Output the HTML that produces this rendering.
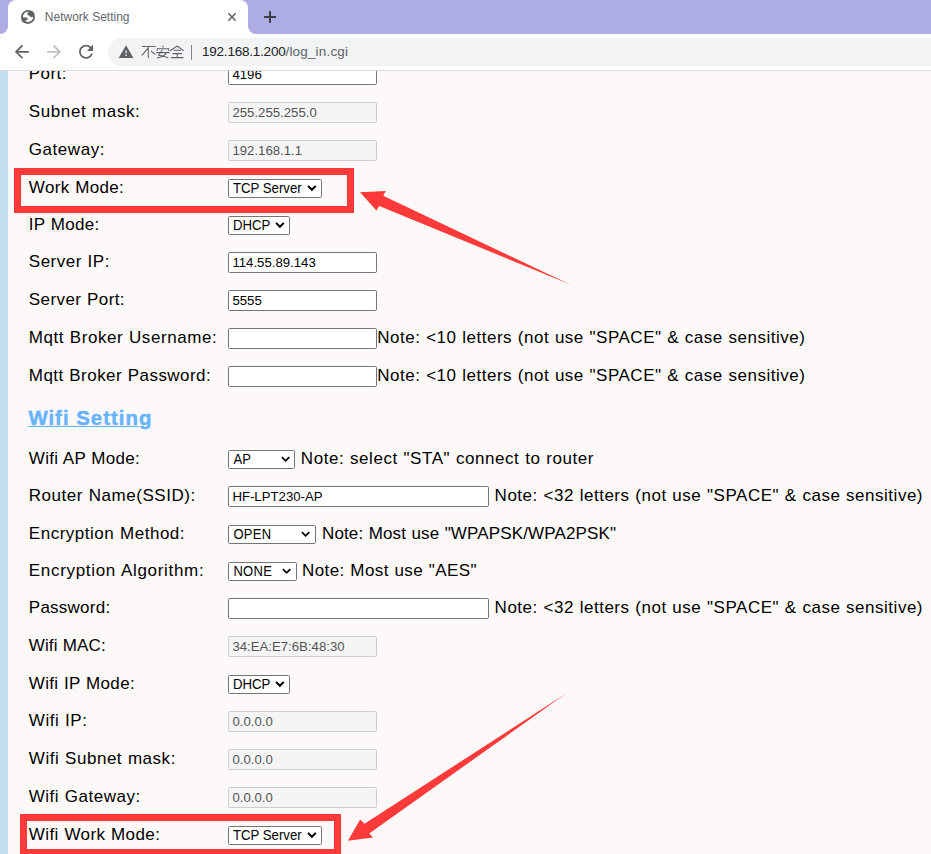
<!DOCTYPE html>
<html><head><meta charset="utf-8"><style>
html,body{margin:0;padding:0;width:931px;height:854px;overflow:hidden;background:#FDF9F8;font-family:"Liberation Sans",sans-serif;}
.t{position:absolute;white-space:pre;}
.a{position:absolute;}
.inp{position:absolute;box-sizing:border-box;background:#fff;border:1px solid #767676;border-radius:1.6px;}
.inp.dis{background:#F5F5F5;border-color:#CDCDCD;}
#page{position:absolute;left:0;top:71px;width:931px;height:783px;overflow:hidden;}
#strip{position:absolute;left:0;top:71px;width:8px;height:783px;background:#C1DEEF;}
#chrome{position:absolute;left:0;top:0;width:931px;height:70px;}
</style></head><body>
<div id="page"><div style="position:absolute;left:0;top:-71px;width:931px;height:854px">
<div class="t" style="left:28.8px;top:64.41px;font-size:17px;line-height:20px;letter-spacing:0.4249999999999894px;word-spacing:0.5px;color:#000;font-weight:normal;">Port:</div>
<div class="t" style="left:28.8px;top:102.11px;font-size:17px;line-height:20px;letter-spacing:0.5999999999999803px;word-spacing:0.5px;color:#000;font-weight:normal;">Subnet mask:</div>
<div class="t" style="left:28.8px;top:139.81px;font-size:17px;line-height:20px;letter-spacing:0.542857142857135px;word-spacing:0.5px;color:#000;font-weight:normal;">Gateway:</div>
<div class="t" style="left:28.8px;top:177.51px;font-size:17px;line-height:20px;letter-spacing:0.35555555555555074px;word-spacing:0.5px;color:#000;font-weight:normal;">Work Mode:</div>
<div class="t" style="left:28.8px;top:215.21px;font-size:17px;line-height:20px;letter-spacing:0.3px;word-spacing:0.5px;color:#000;font-weight:normal;">IP Mode:</div>
<div class="t" style="left:28.8px;top:252.11px;font-size:17px;line-height:20px;letter-spacing:0.5000000000000062px;word-spacing:0.5px;color:#000;font-weight:normal;">Server IP:</div>
<div class="t" style="left:28.8px;top:289.81px;font-size:17px;line-height:20px;letter-spacing:0.4181818181818231px;word-spacing:0.5px;color:#000;font-weight:normal;">Server Port:</div>
<div class="t" style="left:28.8px;top:328.21px;font-size:17px;line-height:20px;letter-spacing:0.5550000000000054px;word-spacing:0.5px;color:#000;font-weight:normal;">Mqtt Broker Username:</div>
<div class="t" style="left:28.8px;top:365.91px;font-size:17px;line-height:20px;letter-spacing:0.45px;word-spacing:0.5px;color:#000;font-weight:normal;">Mqtt Broker Password:</div>
<div class="inp" style="left:228px;top:64px;width:149px;height:21px"></div>
<div class="t" style="left:232.4px;top:67.43px;font-size:13.2px;line-height:16px;letter-spacing:0px;word-spacing:0px;color:#000;font-weight:normal;">4196</div>
<div class="inp dis" style="left:228px;top:102px;width:149px;height:21px"></div>
<div class="t" style="left:232.4px;top:105.43px;font-size:13.2px;line-height:16px;letter-spacing:0px;word-spacing:0px;color:#545454;font-weight:normal;">255.255.255.0</div>
<div class="inp dis" style="left:228px;top:140px;width:149px;height:21px"></div>
<div class="t" style="left:232.4px;top:143.43px;font-size:13.2px;line-height:16px;letter-spacing:0px;word-spacing:0px;color:#545454;font-weight:normal;">192.168.1.1</div>
<div class="inp" style="left:228px;top:179px;width:94px;height:19px"></div>
<div class="t" style="left:233px;top:180.63px;font-size:13.2px;line-height:16px;letter-spacing:0px;word-spacing:0px;color:#000;font-weight:normal;transform:scaleY(1.11);transform-origin:0 11.57px;">TCP Server</div>
<svg class="a" style="left:307px;top:185px" width="11" height="7" viewBox="0 0 11 7"><path d="M1 0.9 L4.9 4.8 L8.8 0.9" fill="none" stroke="#000" stroke-width="2"/></svg>
<div class="inp" style="left:228px;top:216px;width:62px;height:19px"></div>
<div class="t" style="left:233px;top:217.63px;font-size:13.2px;line-height:16px;letter-spacing:0px;word-spacing:0px;color:#000;font-weight:normal;transform:scaleY(1.11);transform-origin:0 11.57px;">DHCP</div>
<svg class="a" style="left:275px;top:222px" width="11" height="7" viewBox="0 0 11 7"><path d="M1 0.9 L4.9 4.8 L8.8 0.9" fill="none" stroke="#000" stroke-width="2"/></svg>
<div class="inp" style="left:228px;top:252px;width:149px;height:21px"></div>
<div class="t" style="left:232.4px;top:255.43px;font-size:13.2px;line-height:16px;letter-spacing:0px;word-spacing:0px;color:#000;font-weight:normal;">114.55.89.143</div>
<div class="inp" style="left:228px;top:290px;width:149px;height:21px"></div>
<div class="t" style="left:232.4px;top:293.43px;font-size:13.2px;line-height:16px;letter-spacing:0px;word-spacing:0px;color:#000;font-weight:normal;">5555</div>
<div class="inp" style="left:228px;top:328px;width:149px;height:21px"></div>
<div class="inp" style="left:228px;top:366px;width:149px;height:21px"></div>
<div class="t" style="left:377.30000000000024px;top:328.21px;font-size:17px;line-height:20px;letter-spacing:0.5058823529411766px;word-spacing:0.5px;color:#000;font-weight:normal;">Note: &lt;10 letters (not use "SPACE" &amp; case sensitive)</div>
<div class="t" style="left:377.30000000000024px;top:365.91px;font-size:17px;line-height:20px;letter-spacing:0.5058823529411766px;word-spacing:0.5px;color:#000;font-weight:normal;">Note: &lt;10 letters (not use "SPACE" &amp; case sensitive)</div>
<div class="t" style="left:28.4px;top:405.63px;font-size:20.4px;line-height:24px;letter-spacing:1.0px;word-spacing:0px;color:#66B3FF;font-weight:bold;-webkit-text-stroke:0.45px #66B3FF;">Wifi Setting</div>
<div style="position:absolute;left:28.4px;top:426px;width:110.5px;height:1.1px;background:#66B3FF"></div>
<div class="t" style="left:28.8px;top:448.71px;font-size:17px;line-height:20px;letter-spacing:0.28333333333331534px;word-spacing:0.5px;color:#000;font-weight:normal;">Wifi AP Mode:</div>
<div class="t" style="left:28.8px;top:485.51px;font-size:17px;line-height:20px;letter-spacing:0.5294117647058757px;word-spacing:0.5px;color:#000;font-weight:normal;">Router Name(SSID):</div>
<div class="t" style="left:28.8px;top:523.71px;font-size:17px;line-height:20px;letter-spacing:0.5176470588235422px;word-spacing:0.5px;color:#000;font-weight:normal;">Encryption Method:</div>
<div class="t" style="left:28.8px;top:561.11px;font-size:17px;line-height:20px;letter-spacing:0.6850000000000107px;word-spacing:0.5px;color:#000;font-weight:normal;">Encryption Algorithm:</div>
<div class="t" style="left:28.8px;top:598.01px;font-size:17px;line-height:20px;letter-spacing:0.2500000000000135px;word-spacing:0.5px;color:#000;font-weight:normal;">Password:</div>
<div class="t" style="left:28.8px;top:636.11px;font-size:17px;line-height:20px;letter-spacing:0.09999999999998649px;word-spacing:0.5px;color:#000;font-weight:normal;">Wifi MAC:</div>
<div class="t" style="left:28.8px;top:673.51px;font-size:17px;line-height:20px;letter-spacing:0.3416666666666666px;word-spacing:0.5px;color:#000;font-weight:normal;">Wifi IP Mode:</div>
<div class="t" style="left:28.8px;top:711.01px;font-size:17px;line-height:20px;letter-spacing:0.5428571428571348px;word-spacing:0.5px;color:#000;font-weight:normal;">Wifi IP:</div>
<div class="t" style="left:28.8px;top:748.71px;font-size:17px;line-height:20px;letter-spacing:0.5374999999999865px;word-spacing:0.5px;color:#000;font-weight:normal;">Wifi Subnet mask:</div>
<div class="t" style="left:28.8px;top:787.31px;font-size:17px;line-height:20px;letter-spacing:0.49999999999999095px;word-spacing:0.5px;color:#000;font-weight:normal;">Wifi Gateway:</div>
<div class="t" style="left:28.8px;top:824.71px;font-size:17px;line-height:20px;letter-spacing:0.4071428571428571px;word-spacing:0.5px;color:#000;font-weight:normal;">Wifi Work Mode:</div>
<div class="inp" style="left:228px;top:450px;width:67px;height:19px"></div>
<div class="t" style="left:233.4px;top:451.70px;font-size:13px;line-height:16px;letter-spacing:0.3px;word-spacing:0px;color:#000;font-weight:normal;transform:scaleY(1.11);transform-origin:0 11.50px;">AP</div>
<svg class="a" style="left:280.5px;top:456px" width="10" height="7" viewBox="0 0 10 7"><path d="M0.9 1.1 L4.6 4.8 L8.3 1.1" fill="none" stroke="#000" stroke-width="1.7"/></svg>
<div class="t" style="left:300.8px;top:448.71px;font-size:17px;line-height:20px;letter-spacing:0.5571428571428572px;word-spacing:0.5px;color:#000;font-weight:normal;">Note: select "STA" connect to router</div>
<div class="inp" style="left:228px;top:486px;width:261px;height:21px"></div>
<div class="t" style="left:232.4px;top:489.43px;font-size:13.2px;line-height:16px;letter-spacing:0px;word-spacing:0px;color:#000;font-weight:normal;">HF-LPT230-AP</div>
<div class="t" style="left:494.59999999999957px;top:485.51px;font-size:17px;line-height:20px;letter-spacing:0.5137254901960867px;word-spacing:0.5px;color:#000;font-weight:normal;">Note: &lt;32 letters (not use "SPACE" &amp; case sensitive)</div>
<div class="inp" style="left:228px;top:525px;width:88px;height:19px"></div>
<div class="t" style="left:233.4px;top:526.70px;font-size:13px;line-height:16px;letter-spacing:0.3px;word-spacing:0px;color:#000;font-weight:normal;transform:scaleY(1.11);transform-origin:0 11.50px;">OPEN</div>
<svg class="a" style="left:300.6px;top:531px" width="10" height="7" viewBox="0 0 10 7"><path d="M0.9 1.1 L4.6 4.8 L8.3 1.1" fill="none" stroke="#000" stroke-width="1.7"/></svg>
<div class="t" style="left:321.99999999999955px;top:523.71px;font-size:17px;line-height:20px;letter-spacing:0.14000000000004315px;word-spacing:0.5px;color:#000;font-weight:normal;">Note: Most use "WPAPSK/WPA2PSK"</div>
<div class="inp" style="left:228px;top:562px;width:69px;height:19px"></div>
<div class="t" style="left:233.4px;top:563.70px;font-size:13px;line-height:16px;letter-spacing:0.3px;word-spacing:0px;color:#000;font-weight:normal;transform:scaleY(1.11);transform-origin:0 11.50px;">NONE</div>
<svg class="a" style="left:281.8px;top:568px" width="10" height="7" viewBox="0 0 10 7"><path d="M0.9 1.1 L4.6 4.8 L8.3 1.1" fill="none" stroke="#000" stroke-width="1.7"/></svg>
<div class="t" style="left:302.00000000000045px;top:561.11px;font-size:17px;line-height:20px;letter-spacing:0.41578947368416486px;word-spacing:0.5px;color:#000;font-weight:normal;">Note: Most use "AES"</div>
<div class="inp" style="left:228px;top:598px;width:261px;height:21px"></div>
<div class="t" style="left:494.59999999999957px;top:598.01px;font-size:17px;line-height:20px;letter-spacing:0.5137254901960867px;word-spacing:0.5px;color:#000;font-weight:normal;">Note: &lt;32 letters (not use "SPACE" &amp; case sensitive)</div>
<div class="inp dis" style="left:228px;top:636px;width:149px;height:21px"></div>
<div class="t" style="left:232.4px;top:639.43px;font-size:13.2px;line-height:16px;letter-spacing:0px;word-spacing:0px;color:#545454;font-weight:normal;">34:EA:E7:6B:48:30</div>
<div class="inp" style="left:228px;top:675px;width:62px;height:19px"></div>
<div class="t" style="left:233px;top:676.63px;font-size:13.2px;line-height:16px;letter-spacing:0px;word-spacing:0px;color:#000;font-weight:normal;transform:scaleY(1.11);transform-origin:0 11.57px;">DHCP</div>
<svg class="a" style="left:275px;top:681px" width="11" height="7" viewBox="0 0 11 7"><path d="M1 0.9 L4.9 4.8 L8.8 0.9" fill="none" stroke="#000" stroke-width="2"/></svg>
<div class="inp dis" style="left:228px;top:711px;width:149px;height:21px"></div>
<div class="t" style="left:232.4px;top:714.43px;font-size:13.2px;line-height:16px;letter-spacing:0px;word-spacing:0px;color:#545454;font-weight:normal;">0.0.0.0</div>
<div class="inp dis" style="left:228px;top:749px;width:149px;height:21px"></div>
<div class="t" style="left:232.4px;top:752.43px;font-size:13.2px;line-height:16px;letter-spacing:0px;word-spacing:0px;color:#545454;font-weight:normal;">0.0.0.0</div>
<div class="inp dis" style="left:228px;top:787px;width:149px;height:21px"></div>
<div class="t" style="left:232.4px;top:790.43px;font-size:13.2px;line-height:16px;letter-spacing:0px;word-spacing:0px;color:#545454;font-weight:normal;">0.0.0.0</div>
<div class="inp" style="left:228px;top:826px;width:94px;height:19px"></div>
<div class="t" style="left:233px;top:827.63px;font-size:13.2px;line-height:16px;letter-spacing:0px;word-spacing:0px;color:#000;font-weight:normal;transform:scaleY(1.11);transform-origin:0 11.57px;">TCP Server</div>
<svg class="a" style="left:307px;top:832px" width="11" height="7" viewBox="0 0 11 7"><path d="M1 0.9 L4.9 4.8 L8.8 0.9" fill="none" stroke="#000" stroke-width="2"/></svg>
</div></div>
<div id="strip"></div>
<svg class="a" style="left:0;top:0" width="931" height="854" viewBox="0 0 931 854">
<rect x="17.5" y="171.5" width="333" height="38" fill="none" stroke="#FC3A3A" stroke-width="7"/>
<rect x="23.5" y="817.5" width="314" height="35" fill="none" stroke="#FC3A3A" stroke-width="7"/>
<polygon fill="#FC3A3A" points="360,192.2 385.8,191.1 383.2,195.8 570.7,284.7 379.3,206.1 376.4,210.6"/>
<polygon fill="#FC3A3A" points="347.9,840.7 360.2,819.4 364.5,823.7 566.8,693.1 369.2,833.4 373.1,837.4"/>
</svg>
<div id="chrome">
 <div style="position:absolute;left:0;top:0;width:931px;height:34px;background:#ADADE3"></div>
 <div style="position:absolute;left:0;top:34px;width:931px;height:36px;background:#FFFFFF"></div>
 <div style="position:absolute;left:0;top:70px;width:931px;height:1px;background:#DADCE0"></div>
 <!-- tab -->
 <div style="position:absolute;left:8px;top:0;width:240px;height:40px;background:#fff;border-radius:8px 8px 0 0"></div>
 <svg class="a" style="left:0;top:26px" width="8" height="8"><path d="M0 8 H8 V0 A8 8 0 0 1 0 8Z" fill="#fff"/></svg>
 <svg class="a" style="left:248px;top:26px" width="8" height="8"><path d="M8 8 H0 V0 A8 8 0 0 0 8 8Z" fill="#fff"/></svg>
 <svg class="a" style="left:18px;top:7px" width="20" height="20" viewBox="0 0 20 20"><circle cx="10" cy="9.9" r="6.05" fill="none" stroke="#5F6368" stroke-width="1.9"/><path d="M11.6 4.3 L9.3 6.3 Q8.8 7.9 10.3 8.3 L11.3 8.4 Q12 9.2 12.5 10 Q13.6 10.7 15.3 9.6 L16.6 6.5 L14 3.8 Z M3.6 10.2 L8.4 10.4 Q9.9 11.1 9.8 12.2 Q9.5 13.1 8.1 13.3 Q7.4 13.6 7.4 14.4 L7.4 16.6 L3.8 14.5 Z" fill="#5F6368"/></svg>
 <div class="t" style="left:44.8px;top:9.7px;font-size:12px;line-height:14px;color:#63676B">Network Setting</div>
 <svg class="a" style="left:227px;top:12px" width="10" height="10" viewBox="0 0 10 10"><path d="M1.3 1.3 L8.7 8.7 M8.7 1.3 L1.3 8.7" stroke="#5F6368" stroke-width="1.5"/></svg>
 <svg class="a" style="left:263px;top:10px" width="14" height="14" viewBox="0 0 14 14"><path d="M7 1 V13 M1 7 H13" stroke="#3C4043" stroke-width="2"/></svg>
 <!-- nav -->
 <svg class="a" style="left:0;top:0" width="100" height="70" viewBox="0 0 100 70">
  <g transform="translate(14.8,44.8) scale(0.875) translate(-4,-4)"><path d="M20 11H7.83l5.59-5.59L12 4l-8 8 8 8 1.41-1.41L7.83 13H20v-2z" fill="#5F6368"/></g>
  <g transform="translate(47.1,44.8) scale(0.875) translate(-4,-4)"><path d="M12 4l-1.41 1.41L16.17 11H4v2h12.17l-5.58 5.59L12 20l8-8z" fill="#BDC1C6"/></g>
  <g transform="translate(79.1,44.8) scale(0.875) translate(-4,-4)"><path d="M17.65 6.35C16.2 4.9 14.21 4 12 4c-4.42 0-7.99 3.58-7.99 8s3.57 8 7.99 8c3.73 0 6.84-2.55 7.73-6h-2.08c-.82 2.33-3.04 4-5.65 4-3.31 0-6-2.690-6-6s2.69-6 6-6c1.66 0 3.14.69 4.22 1.78L13 11h7V4l-2.35 2.350z" fill="#5F6368"/></g>
 </svg>
 <div style="position:absolute;left:108px;top:38px;width:840px;height:27.5px;background:#F1F3F4;border-radius:14px"></div>
 <svg class="a" style="left:0;top:0" width="200" height="70" viewBox="0 0 200 70">
  <g transform="translate(118.7,45.2) scale(0.67) translate(-1,-2)"><path d="M1 21h22L12 2 1 21zm12-3h-2v-2h2v2zm0-4h-2v-4h2v4z" fill="#5F6368"/></g>
  <g fill="none" stroke="#5F6368" stroke-width="1.05" stroke-linecap="butt">
   <path d="M142 46.5 H155.7 M148.3 46.5 V57.9 M148.3 47.8 L142 55.4 M150.9 51 L155.5 54.7"/>
   <path d="M162.6 45.6 L163.3 47.6 M157.3 50.8 V48.7 H168.6 V50.8 M156.3 52.6 H169.7 M162.3 50 L158.6 55.2 Q163 55.5 168.4 58 M166.2 52.6 Q165.5 56.3 157 58"/>
   <path d="M177.2 46 L170 50.8 M177.2 46 L183.8 50.8 M173.6 50.3 H181 M172.4 53.6 H181.9 M177.2 53.6 V57.6 M170.8 57.6 H183.5"/>
  </g>
 </svg>
 <div style="position:absolute;left:191px;top:44.5px;width:1px;height:15px;background:#80868B"></div>
 <div class="t" style="left:202px;top:44.2px;font-size:13.5px;line-height:16px;color:#202124;letter-spacing:-0.22px">192.168.1.200<span style="color:#5F6368;letter-spacing:0.17px">/log_in.cgi</span></div>
</div>
</body></html>
